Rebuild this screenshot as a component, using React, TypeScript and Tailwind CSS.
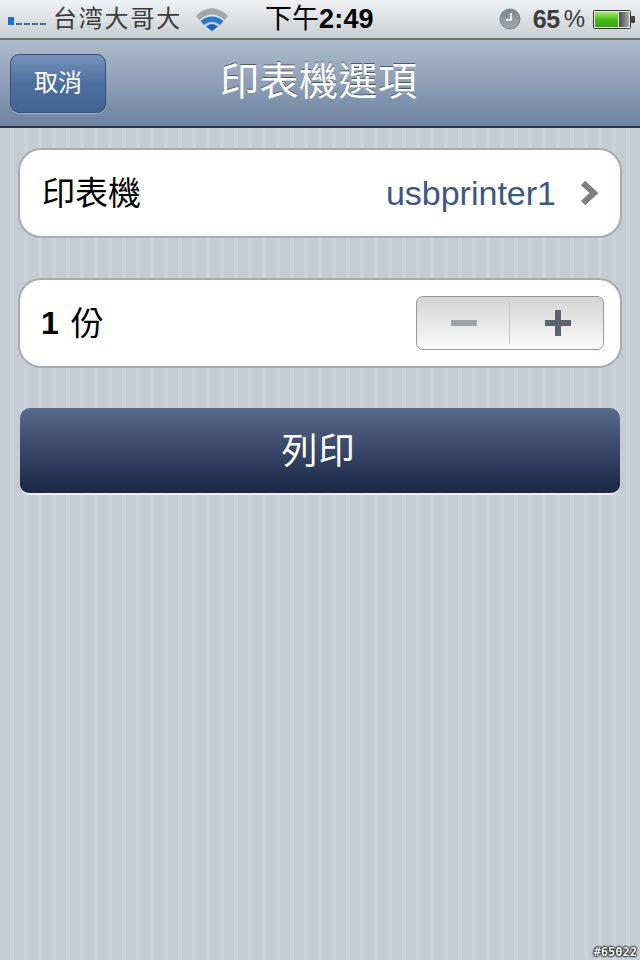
import React from "react";

const cjk = "font-['Liberation_Sans','Noto_Sans_CJK_TC',sans-serif]";

function Signal() {
  return (
    <svg width="41" height="12" viewBox="0 0 41 12" className="block">
      <rect x="0" y="2" width="6" height="8" fill="#1d6fd8" />
      <rect x="8" y="8" width="6" height="2" fill="#3f6fa8" />
      <rect x="16" y="8" width="6" height="2" fill="#3f6fa8" />
      <rect x="24" y="8" width="6" height="2" fill="#3f6fa8" />
      <rect x="32" y="8" width="6" height="2" fill="#3f6fa8" />
    </svg>
  );
}

function Wifi() {
  return (
    <svg width="34" height="24" viewBox="0 0 34 24" className="block">
      <path d="M1 9 C10 -1 24 -1 33 9 L29.5 13 C22 5.5 12 5.5 4.5 13 Z" fill="#a3a7aa" />
      <path d="M5.5 14 C12 8 22 8 28.5 14 L25 18 C20 14 14 14 9 18 Z" fill="#2a78d8" />
      <path d="M11 19.5 C15 16 19 16 23 19.5 L17 24 Z" fill="#1c62bf" />
    </svg>
  );
}

function Clock() {
  return (
    <svg width="22" height="22" viewBox="0 0 22 22" className="block">
      <defs>
        <linearGradient id="cg" x1="0" y1="0" x2="0" y2="1">
          <stop offset="0" stopColor="#7d868b" />
          <stop offset="1" stopColor="#a2aaae" />
        </linearGradient>
      </defs>
      <circle cx="11" cy="11" r="10" fill="url(#cg)" stroke="#7a8388" />
      <path d="M12 5 V12 H7" stroke="#fff" strokeWidth="1.6" fill="none" />
    </svg>
  );
}

function Battery() {
  return (
    <svg width="44" height="22" viewBox="0 0 44 22" className="block">
      <defs>
        <linearGradient id="bg" x1="0" y1="0" x2="0" y2="1">
          <stop offset="0" stopColor="#a0ea70" />
          <stop offset="0.5" stopColor="#46bd18" />
          <stop offset="1" stopColor="#35a60e" />
        </linearGradient>
        <linearGradient id="be" x1="0" y1="0" x2="1" y2="0">
          <stop offset="0" stopColor="#4a4a4a" />
          <stop offset="1" stopColor="#a8a8a8" />
        </linearGradient>
      </defs>
      <rect x="0.5" y="2.5" width="37" height="18" rx="1" fill="#e8ebdf" stroke="#333" />
      <rect x="2" y="4" width="23" height="15" fill="url(#bg)" />
      <rect x="26" y="4" width="10" height="15" fill="url(#be)" />
      <rect x="38" y="8" width="4" height="7" rx="1" fill="#444" />
    </svg>
  );
}

export default function App() {
  return (
    <div className={`relative flex h-[960px] w-[640px] flex-col overflow-hidden bg-[repeating-linear-gradient(90deg,#c5ccd4_0px,#c5ccd4_10px,#cbd2d9_10px,#cbd2d9_14px)] ${cjk}`}>
      {/* status bar */}
      <div className="flex h-10 items-center border-b-2 border-[#6f7274] bg-gradient-to-b from-[#f0f3f5] to-[#c9ced1] text-[#3c3c3c]">
        <div className="ml-2 mt-1"><Signal /></div>
        <span className="ml-[4px] text-[24px] leading-none tracking-[1.8px]">台湾大哥大</span>
        <div className="ml-[13px]"><Wifi /></div>
        <span className="ml-[36px] text-[27px] leading-none text-black">下午<b className="font-bold tracking-[0.2px]">2:49</b></span>
        <div className="ml-auto"><Clock /></div>
        <span className="ml-[12px] text-[25px] font-bold leading-none tracking-[-0.5px]">65</span>
        <span className="ml-[4px] text-[24px] leading-none">%</span>
        <div className="ml-[8px] mr-[3px]"><Battery /></div>
      </div>

      {/* nav bar */}
      <div className="flex h-[88px] items-center border-b-2 border-[#2d3642] bg-gradient-to-b from-[#b0bccd] to-[#6d83a2] pl-[10px]">
        <button className="flex h-[59px] w-[96px] items-center justify-center rounded-[9px] border border-[#35506f] bg-gradient-to-b from-[#7593bb] via-[#4d6f9f] to-[#416495] text-[24px] text-white shadow-[0_1px_0_#a5b3c6]">
          取消
        </button>
        <h1 className="mb-[3px] ml-[114px] text-[39px] font-normal leading-none tracking-[0.5px] text-white [text-shadow:0_-1px_0_#4c5b70]">印表機選項</h1>
      </div>

      {/* content */}
      <div className="flex flex-col gap-[40px] px-[18px] pt-[20px]">
        <div className="flex h-[90px] items-center rounded-[23px] border-2 border-[#a9acaf] bg-white pl-[22px] pr-[21px]">
          <span className="text-[33px] leading-none text-black">印表機</span>
          <span className="ml-auto text-[34px] leading-none text-[#3c5787]">usbprinter1</span>
          <svg width="20" height="26" viewBox="0 0 20 26" className="ml-[23px]">
            <path d="M4 3 L15 13 L4 23" fill="none" stroke="#7f7f7f" strokeWidth="6" />
          </svg>
        </div>

        <div className="flex h-[90px] items-center rounded-[23px] border-2 border-[#a9acaf] bg-white pl-[21px] pr-[16px]">
          <span className="text-[32px] font-bold leading-none text-black">1</span>
          <span className="ml-[12px] text-[33px] leading-none text-black">份</span>
          <div className="ml-auto flex h-[54px] w-[188px] items-center rounded-[7px] border border-[#96999c] bg-gradient-to-b from-[#d5d5d5] to-[#fafafa]">
            <div className="flex h-full w-[92px] items-center justify-center pl-[2px]">
              <div className="h-[6px] w-[26px] bg-[#a0a4a8]" />
            </div>
            <div className="h-[41px] w-px bg-[#c4c6c8]" />
            <div className="flex h-full flex-1 items-center justify-center pl-[2px]">
              <svg width="26" height="26" viewBox="0 0 26 26">
                <path d="M10 0h6v10h10v6H16v10h-6V16H0v-6h10z" fill="#5a6470" />
              </svg>
            </div>
          </div>
        </div>
      </div>

      <div className="px-[20px] pt-[40px]">
        <button className="flex h-[87px] w-full items-center justify-center rounded-[10px] border-b-2 border-b-[#eef0f3] bg-gradient-to-b from-[#5a6a8b] to-[#192746] pr-[3px] pt-[3px] text-[36px] tracking-[1px] text-white">
          列印
        </button>
      </div>

      <span className="absolute bottom-[2px] right-[3px] font-['DejaVu_Sans_Mono',monospace] text-[12px] font-bold leading-[12px] text-white [text-shadow:0_0_2px_#000,0_0_2px_#000,0_0_2px_#000,0_0_1px_#000]">#65022</span>
    </div>
  );
}
